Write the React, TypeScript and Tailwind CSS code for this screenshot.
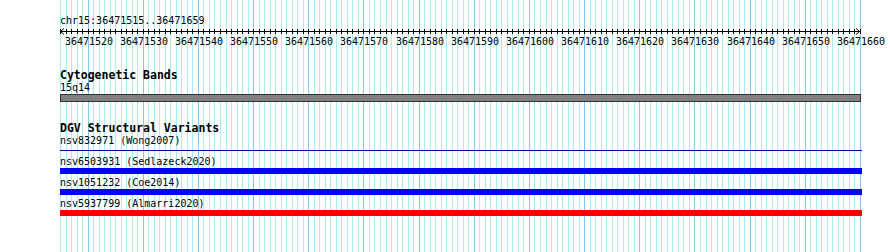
const START = 36471515
const END = 36471660
const LEFT = 60
const WIDTH = 800
const PX = WIDTH / (END - START)

const xAt = (bp: number) => LEFT + (bp - START) * PX

const variants = [
  { name: 'nsv832971 (Wong2007)', kind: 'line', color: 'bg-[#0000a8]' },
  { name: 'nsv6503931 (Sedlazeck2020)', kind: 'bar', color: 'bg-[#0000ff]' },
  { name: 'nsv1051232 (Coe2014)', kind: 'bar', color: 'bg-[#0000ff]' },
  { name: 'nsv5937799 (Almarri2020)', kind: 'bar', color: 'bg-[#ff0000]' },
]

function Grid() {
  const lines = []
  for (let bp = START; bp <= END; bp++) {
    const x = Math.round(xAt(bp)) + 0.5
    const major = bp % 10 === 0
    lines.push(
      <line key={bp} x1={x} x2={x} y1={0} y2={252} stroke={major ? '#86c6ee' : '#aaecef'} strokeWidth={1} />,
    )
  }
  return (
    <svg className="absolute inset-0 pointer-events-none" width={890} height={252}>
      {lines}
    </svg>
  )
}

function Axis() {
  const ticks = []
  for (let bp = START; bp <= END; bp++) {
    const x = Math.round(xAt(bp) - LEFT) + 0.5
    ticks.push(<line key={bp} x1={x} x2={x} y1={2} y2={7} stroke="#000" strokeWidth={1} />)
  }
  return (
    <svg width={WIDTH + 2} height={9} className="block -ml-px">
      <g transform="translate(1,0)">
        <line x1={0} x2={WIDTH} y1={4.5} y2={4.5} stroke="#000" strokeWidth={1} />
        {ticks}
        <path d="M4 1.5 L0.5 4.5 L4 7.5" fill="none" stroke="#000" strokeWidth={1} />
        <path d={`M${WIDTH - 4} 1.5 L${WIDTH - 0.5} 4.5 L${WIDTH - 4} 7.5`} fill="none" stroke="#000" strokeWidth={1} />
      </g>
    </svg>
  )
}

function AxisLabels() {
  const labels = []
  for (let bp = START; bp <= END; bp++) {
    if (bp % 10 !== 0) continue
    labels.push(
      <span
        key={bp}
        className="absolute top-0 -translate-x-1/2 whitespace-nowrap"
        style={{ left: Math.round(xAt(bp) - LEFT) + 1 }}
      >
        {bp}
      </span>,
    )
  }
  return <div className="relative h-[12px] leading-[12px]">{labels}</div>
}

export default function App() {
  return (
    <div className="relative w-[890px] h-[252px] overflow-hidden bg-white text-black font-['DejaVu_Sans_Mono',monospace] text-[10px]">
      <Grid />

      <div className="relative pl-[60px] w-[860px]">
        {/* Ruler */}
        <div className="pt-[15px] leading-[12px]">chr15:36471515..36471659</div>
        <Axis />
        <AxisLabels />

        {/* Cytogenetic bands */}
        <div className="mt-[21px] text-[11.5px] font-bold leading-[13px]">Cytogenetic Bands</div>
        <div className="leading-[12px]">15q14</div>
        <div className="h-[8px] w-[801px] border border-[#333] bg-[#808080]" />

        {/* DGV */}
        <div className="mt-[20px] text-[11.5px] font-bold leading-[13px]">DGV Structural Variants</div>
        <div className="flex flex-col gap-[3px]">
          {variants.map((v) => (
            <div key={v.name}>
              <div className="leading-[12px]">{v.name}</div>
              <div className="h-[6px] w-[802px] flex items-center">
                <div className={`${v.color} w-full ${v.kind === 'line' ? 'h-px' : 'h-[6px]'}`} />
              </div>
            </div>
          ))}
        </div>
      </div>
    </div>
  )
}
